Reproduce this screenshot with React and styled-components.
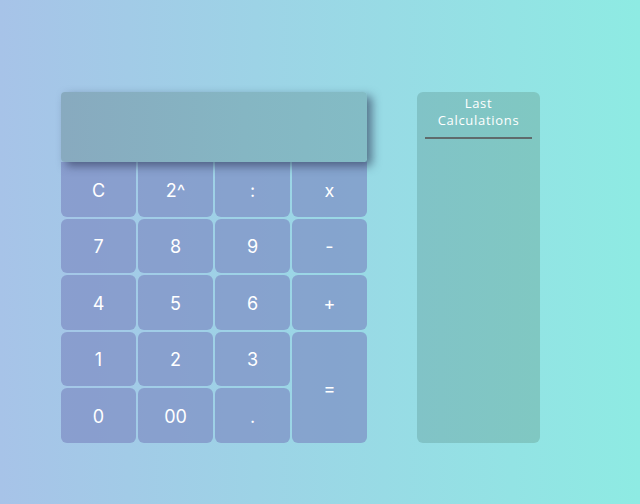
import React from "react";
import styled, { createGlobalStyle } from "styled-components";

const Global = createGlobalStyle`
  html, body { margin: 0; padding: 0; }
  body {
    width: 640px;
    height: 504px;
    overflow: hidden;
    background: linear-gradient(90deg, #a7c3e8 0%, #8eebe3 100%);
    font-family: Inter, "Noto Sans", sans-serif;
  }
`;

const Page = styled.div`
  display: flex;
  align-items: flex-start;
  gap: 50px;
  padding: 92px 0 0 61px;
  height: 504px;
  box-sizing: border-box;
`;

const Calculator = styled.div`
  display: flex;
  flex-direction: column;
  width: 306px;
`;

const Display = styled.div`
  position: relative;
  z-index: 1;
  height: 70px;
  border-radius: 4px;
  background: linear-gradient(90deg, #88aabf 0%, #85b6c3 60%, #83bcc5 100%);
  box-shadow: 5px 4px 10px rgba(40, 50, 80, 0.6);
`;

const Keys = styled.div`
  display: grid;
  grid-template-columns: repeat(4, 75px);
  grid-template-rows: repeat(5, 54.5px);
  gap: 2px 2px;
`;

const Key = styled.button`
  border: none;
  margin: 0;
  padding: 2px 0 0;
  border-radius: 6px;
  background: rgba(120, 130, 190, 0.6);
  color: #ffffff;
  font-family: Inter, "Noto Sans", sans-serif;
  font-size: 18px;
  font-weight: 400;
  display: flex;
  align-items: center;
  justify-content: center;
  grid-row: ${(p) => (p.$tall ? "span 2" : "auto")};
  ${(p) => (p.$top ? "border-top-left-radius: 0; border-top-right-radius: 0;" : "")}
`;

const History = styled.div`
  width: 123px;
  height: 351px;
  border-radius: 6px;
  background: linear-gradient(90deg, #81c3c7 0%, #80c8c2 100%);
  display: flex;
  flex-direction: column;
  align-items: center;
  padding: 3px 6px 0;
  box-sizing: border-box;
`;

const Title = styled.div`
  color: #ffffff;
  font-family: "Open Sans", "Noto Sans", sans-serif;
  font-size: 13px;
  line-height: 17px;
  text-align: center;
  letter-spacing: 0.7px;
`;

const Rule = styled.div`
  width: 107px;
  height: 2px;
  margin-top: 8px;
  background: #5f6b6c;
`;

const keys = [
  ["C"], ["2^"], [":"], ["x"],
  ["7"], ["8"], ["9"], ["-"],
  ["4"], ["5"], ["6"], ["+"],
  ["1"], ["2"], ["3"], ["=", true],
  ["0"], ["00"], ["."],
];

export default function App() {
  return (
    <>
      <Global />
      <Page>
        <Calculator>
          <Display />
          <Keys>
            {keys.map(([label, tall], i) => (
              <Key key={i} $tall={tall} $top={i < 4}>
                {label}
              </Key>
            ))}
          </Keys>
        </Calculator>
        <History>
          <Title>
            Last
            <br />
            Calculations
          </Title>
          <Rule />
        </History>
      </Page>
    </>
  );
}
